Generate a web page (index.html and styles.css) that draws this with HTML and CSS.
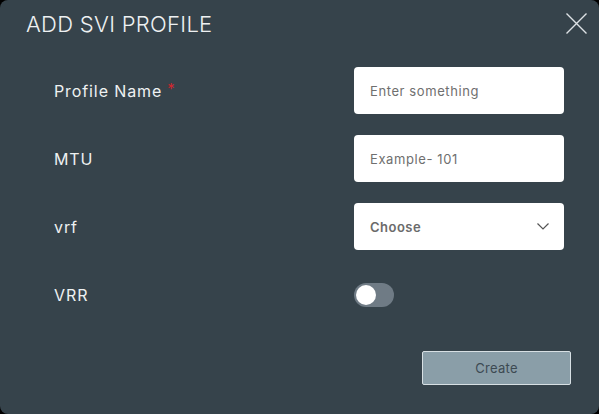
FILE: index.html
```html
<!DOCTYPE html>
<html>
<head>
<meta charset="utf-8">
<link rel="stylesheet" href="styles.css">
</head>
<body>
<div class="dialog">
  <div class="header">
    <h1 class="title">ADD SVI PROFILE</h1>
    <button class="close" aria-label="Close">
      <svg width="21" height="21" viewBox="0 0 21 21"><path d="M0.5 0.5L20.5 20.5M20.5 0.5L0.5 20.5" stroke="#dde2e5" stroke-width="1.4" fill="none"/></svg>
    </button>
  </div>
  <div class="form">
    <div class="label">Profile Name <span class="req">*</span></div>
    <div class="control"><input class="input" placeholder="Enter something"></div>
    <div class="label">MTU</div>
    <div class="control"><input class="input" placeholder="Example- 101"></div>
    <div class="label">vrf</div>
    <div class="control">
      <div class="select"><span>Choose</span>
        <svg width="12" height="7" viewBox="0 0 12 7"><path d="M0.5 0.5L6 6L11.5 0.5" stroke="#555" stroke-width="1.2" fill="none"/></svg>
      </div>
    </div>
    <div class="label">VRR</div>
    <div class="control"><div class="toggle"><div class="knob"></div></div></div>
  </div>
  <div class="footer">
    <button class="create">Create</button>
  </div>
</div>
</body>
</html>
```
FILE: styles.css
```css
html, body { margin: 0; padding: 0; background: #000; }
body { font-family: "Inter", "Open Sans", sans-serif; }
.dialog {
  width: 599px; height: 414px; box-sizing: border-box;
  background: #36434b; border-radius: 8px; overflow: hidden;
}
.header {
  display: flex; justify-content: space-between; align-items: flex-start;
  height: 47px; padding: 13px 12px 0 26px; box-sizing: border-box;
}
.title {
  margin: 0; font-weight: 300; font-size: 22px; line-height: 22px;
  color: #eef1f2; letter-spacing: 0.3px;
}
.close { background: none; border: 0; padding: 0; width: 21px; height: 21px; cursor: pointer; display: block; }
.close svg { display: block; }
.form {
  display: grid; grid-template-columns: 300px 210px;
  grid-auto-rows: 47px; row-gap: 21px;
  padding-left: 54px; margin-top: 20px;
}
.label { display: flex; align-items: center; color: #eef1f2; font-size: 16px; letter-spacing: 0.9px; }
.req { color: #d0262e; margin-left: 5px; position: relative; top: -2px; font-size: 15px; }
.control { display: flex; align-items: center; }
.input {
  width: 210px; height: 47px; box-sizing: border-box; border: 0; border-radius: 4px;
  background: #fff; padding: 0 16px; font-family: inherit; font-size: 13px; color: #333; outline: none;
  letter-spacing: 0.6px;
}
.input::placeholder { color: #6f6f6f; }
.select {
  width: 210px; height: 47px; box-sizing: border-box; border-radius: 4px; background: #fff;
  display: flex; align-items: center; justify-content: space-between; padding: 0 15px 0 16px;
  font-size: 13px; font-weight: 600; color: #6b6b6b; letter-spacing: 0.5px;
}
.select svg { display: block; }
.toggle {
  width: 40px; height: 24px; border-radius: 12px; background: #6f7b85;
  display: flex; align-items: center; padding-left: 2px; box-sizing: border-box;
}
.knob { width: 20px; height: 20px; border-radius: 50%; background: #fff; }
.footer { display: flex; justify-content: flex-end; padding-right: 28px; margin-top: 33px; }
.create {
  width: 149px; height: 34px; box-sizing: border-box; background: #8a9ea8;
  border: 1px solid #d7dfe3; border-radius: 2px; color: #3d4a53;
  font-family: inherit; font-size: 13px; letter-spacing: 0.3px;
}
```
